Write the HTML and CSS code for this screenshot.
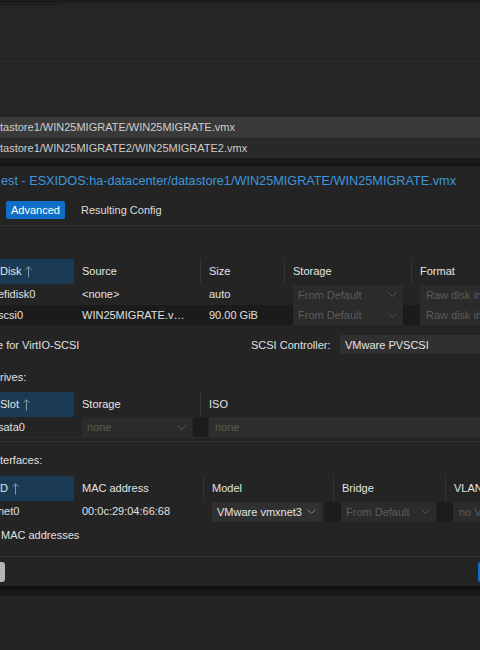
FILE: index.html
```html
<!DOCTYPE html>
<html lang="en">

<head>
    <meta charset="UTF-8">
    <meta name="viewport" content="width=device-width, initial-scale=1.0">
    <title>Import Guest</title>
    <link rel="stylesheet" href="styles.css">
</head>

<body>
    <div class="backdrop">
        <div class="top-strip"></div>
        <div class="tab-mark"></div>
        <div class="upper"></div>
        <div class="files">
            <div class="file-row sel">tastore1/WIN25MIGRATE/WIN25MIGRATE.vmx</div>
            <div class="file-row next">tastore1/WIN25MIGRATE2/WIN25MIGRATE2.vmx</div>
        </div>
        <div class="edge1"></div>
        <div class="edge2"></div>
    </div>

    <div class="dialog">
        <div class="dlg-title">est - ESXIDOS:ha-datacenter/datastore1/WIN25MIGRATE/WIN25MIGRATE.vmx</div>
        <div class="tabs">
            <div class="tab active">Advanced</div>
            <div class="tab">Resulting Config</div>
        </div>

        <div class="panel">
            <!-- disks -->
            <div class="grid disks">
                <div class="grid-row head">
                    <div class="hd sorted">Disk<svg class="arrow" width="7" height="12" viewBox="0 0 7 12"><path d="M3.5 0.8V11.5M0.6 3.7L3.5 0.8L6.4 3.7" /></svg></div>
                    <div class="hd">Source</div>
                    <div class="hd">Size</div>
                    <div class="hd">Storage</div>
                    <div class="hd">Format</div>
                </div>
                <div class="grid-row">
                    <div class="cell first">efidisk0</div>
                    <div class="cell">&lt;none&gt;</div>
                    <div class="cell">auto</div>
                    <div class="cell fld">
                        <div class="combo off">From Default<svg class="chev" width="9" height="5" viewBox="0 0 9 5"><path d="M0.5 0.5L4.5 4.5L8.5 0.5" /></svg></div>
                    </div>
                    <div class="cell fld"><div class="field off">Raw disk image (raw)</div></div>
                </div>
                <div class="grid-row alt">
                    <div class="cell first">scsi0</div>
                    <div class="cell">WIN25MIGRATE.v…</div>
                    <div class="cell">90.00 GiB</div>
                    <div class="cell fld">
                        <div class="combo off">From Default<svg class="chev" width="9" height="5" viewBox="0 0 9 5"><path d="M0.5 0.5L4.5 4.5L8.5 0.5" /></svg></div>
                    </div>
                    <div class="cell fld"><div class="field off">Raw disk image (raw)</div></div>
                </div>
            </div>

            <div class="scsi-row">
                <div class="scsi-check">e for VirtIO-SCSI</div>
                <div class="scsi-label">SCSI Controller:</div>
                <div class="combo on wide">VMware PVSCSI</div>
            </div>

            <!-- cd drives -->
            <div class="sect-label">rives:</div>
            <div class="grid cds">
                <div class="grid-row head">
                    <div class="hd sorted">Slot<svg class="arrow" width="7" height="12" viewBox="0 0 7 12"><path d="M3.5 0.8V11.5M0.6 3.7L3.5 0.8L6.4 3.7" /></svg></div>
                    <div class="hd">Storage</div>
                    <div class="hd">ISO</div>
                </div>
                <div class="grid-row bottom">
                    <div class="cell first">sata0</div>
                    <div class="cell fld">
                        <div class="combo off">none<svg class="chev" width="9" height="5" viewBox="0 0 9 5"><path d="M0.5 0.5L4.5 4.5L8.5 0.5" /></svg></div>
                    </div>
                    <div class="cell fld pair">
                        <div class="knob iso"></div>
                        <div class="field off iso-f">none</div>
                    </div>
                </div>
            </div>
            <div class="rule"></div>

            <!-- network -->
            <div class="sect-label net-label">terfaces:</div>
            <div class="grid nets">
                <div class="grid-row head">
                    <div class="hd sorted">D<svg class="arrow" width="7" height="12" viewBox="0 0 7 12"><path d="M3.5 0.8V11.5M0.6 3.7L3.5 0.8L6.4 3.7" /></svg></div>
                    <div class="hd">MAC address</div>
                    <div class="hd">Model</div>
                    <div class="hd">Bridge</div>
                    <div class="hd">VLAN Tag</div>
                </div>
                <div class="grid-row">
                    <div class="cell first">net0</div>
                    <div class="cell">00:0c:29:04:66:68</div>
                    <div class="cell fld">
                        <div class="combo on model">VMware vmxnet3<svg class="chev" width="9" height="5" viewBox="0 0 9 5"><path d="M0.5 0.5L4.5 4.5L8.5 0.5" /></svg></div>
                    </div>
                    <div class="cell fld pair">
                        <div class="knob"></div>
                        <div class="combo off bridge">From Default<svg class="chev" width="9" height="5" viewBox="0 0 9 5"><path d="M0.5 0.5L4.5 4.5L8.5 0.5" /></svg></div>
                    </div>
                    <div class="cell fld pair">
                        <div class="knob"></div>
                        <div class="field off">no VLAN</div>
                    </div>
                </div>
            </div>

            <div class="mac-check">MAC addresses</div>
        </div>

        <div class="footer">
            <div class="btn grey"></div>
            <div class="btn blue"></div>
        </div>
    </div>
    <div class="shade1"></div>
    <div class="shade2"></div>
</body>

</html>
```
FILE: styles.css
```css
body {
    margin: 0;
    width: 480px;
    height: 650px;
    overflow: hidden;
    background-color: #242424;
    font-family: "Liberation Sans", Arial, sans-serif;
    font-size: 11px;
    color: #e0e0e0;
}

/* window behind the dialog */
.backdrop {
    background-color: #252525;
}

.top-strip {
    height: 3px;
    background-color: #1c1c1c;
}

.tab-mark {
    width: 58px;
    height: 1px;
    margin-top: 1px;
    background-color: #181818;
}

.upper {
    height: 56px;
    border-bottom: 1px solid #2d2d2d;
}

.files {
    margin-top: 55px;
}

.file-row {
    height: 20px;
    line-height: 20px;
    white-space: nowrap;
    color: #cdcdcd;
}

.file-row.sel {
    background-color: #3a3a3a;
    border-bottom: 1px solid #303030;
}

.file-row.next {
    background-color: #292929;
}

.edge1 {
    height: 5px;
    background-color: #1b1b1b;
}

.edge2 {
    height: 3px;
    background-color: #131313;
}

/* dialog */
.dialog {
    background-color: #242424;
}

.dlg-title {
    height: 32px;
    line-height: 31px;
    padding-left: 1px;
    font-size: 12.7px;
    color: #3d97dc;
    white-space: nowrap;
}

.tabs {
    display: flex;
    gap: 11px;
    height: 24px;
    padding: 3px 0 0 6px;
    border-bottom: 1px solid #333;
}

.tab {
    height: 18px;
    line-height: 18px;
    padding: 0 5px;
    border-radius: 2px;
    color: #dcdcdc;
}

.tab.active {
    background-color: #0f6fc6;
    color: #fff;
}

.panel {
    padding: 33px 0 13px;
}

.grid-row {
    display: grid;
}

.disks .grid-row {
    grid-template-columns: 73px 127px 84px 127px 200px;
}

.cds .grid-row {
    grid-template-columns: 73px 127px 300px;
}

.nets .grid-row {
    grid-template-columns: 73px 130px 130px 112px 200px;
}

.hd {
    height: 25px;
    line-height: 25px;
    padding-left: 8px;
    border-left: 1px solid #333;
    color: #e4e4e4;
    white-space: nowrap;
    overflow: hidden;
}

.hd.sorted {
    display: flex;
    align-items: center;
    padding-left: 0;
    border-left: none;
    background-color: #1b3a54;
}

.arrow {
    margin-left: 4px;
    fill: none;
    stroke: #8399ac;
    stroke-width: 1;
}

.cell {
    height: 21px;
    line-height: 21px;
    padding-left: 9px;
    white-space: nowrap;
    overflow: hidden;
}

.cell.first {
    padding-left: 0;
    text-indent: -2px;
}

.cell.fld {
    display: flex;
    align-items: center;
    padding-left: 0;
    overflow: visible;
}

.alt .cell {
    height: 20px;
    line-height: 20px;
    background-color: #1b1b1b;
}

.bottom .cell {
    height: 20px;
    line-height: 20px;
    border-bottom: 1px solid #2b2b2b;
}

.combo,
.field {
    display: flex;
    align-items: center;
    justify-content: space-between;
    box-sizing: border-box;
    height: 20px;
    line-height: 20px;
    padding: 0 6px 0 5px;
    white-space: nowrap;
    overflow: hidden;
}

.combo {
    margin: 0 8px 0 9px;
    flex: 1;
}

.field {
    margin-left: 9px;
    flex: 1;
    justify-content: flex-start;
    padding-left: 6px;
}

.off {
    background-color: #2b2b2b;
    color: #5b5b5b;
}

.on {
    background-color: #303030;
    color: #e4e4e4;
}

.chev {
    flex-shrink: 0;
    fill: none;
    stroke: #555;
    stroke-width: 1;
}

.on .chev {
    stroke: #858585;
}

.pair .knob {
    flex-shrink: 0;
    width: 16px;
    height: 20px;
    margin-left: -8px;
    background-color: #1c1c1c;
}

.pair .knob.iso {
    width: 15px;
    margin-left: -7px;
}

.pair .field {
    margin-left: 0;
}

.pair .iso-f {
    margin-left: 1px;
    background-color: #2e2e2e;
}

.model {
    flex: 0 0 110px;
}

.pair .bridge {
    flex: 0 0 95px;
    margin: 0 9px 0 0;
}

.scsi-row {
    display: flex;
    align-items: center;
    height: 19px;
    margin-top: 10px;
}

.scsi-check {
    flex: 0 0 254px;
    margin-left: -3px;
    white-space: nowrap;
}

.scsi-label {
    flex: 0 0 89px;
    white-space: nowrap;
}

.combo.wide {
    height: 19px;
    margin: 0;
}

.sect-label {
    margin-top: 15px;
    line-height: 16px;
}

.cds {
    margin-top: 7px;
}

.rule {
    height: 1px;
    margin-top: 3px;
    background-color: #333;
}

.net-label {
    margin-top: 10px;
}

.nets {
    margin-top: 8px;
}

.mac-check {
    margin-top: 5px;
    padding-left: 1px;
    line-height: 16px;
}

.footer {
    display: flex;
    justify-content: space-between;
    padding: 5px 0 4px;
    border-top: 1px solid #353535;
}

.btn {
    height: 20px;
}

.btn.grey {
    width: 5px;
    border-radius: 0 3px 3px 0;
    background-color: #b4b4b4;
}

.btn.blue {
    width: 2px;
    border-radius: 3px 0 0 3px;
    background-color: #0f6fc6;
}

.shade1 {
    height: 4px;
    background-color: #111;
}

.shade2 {
    height: 6px;
    background-color: #1a1a1a;
}
```
